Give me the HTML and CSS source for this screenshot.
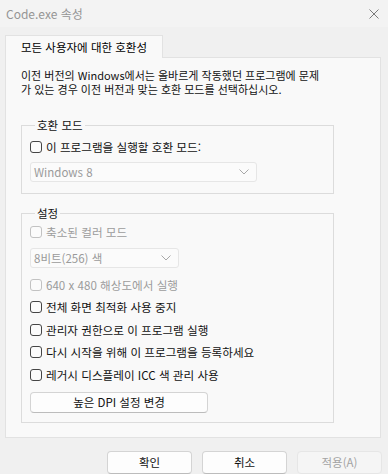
FILE: index.html
```html
<!DOCTYPE html>
<html lang="ko">
<head>
    <meta charset="UTF-8">
    <meta name="viewport" content="width=device-width, initial-scale=1.0">
    <title>Code.exe 속성</title>
    <link rel="stylesheet" href="styles.css">
</head>
<body>
    <div class="titlebar">
        <span class="title">Code.exe 속성</span>
        <svg class="close" width="10" height="10" viewBox="0 0 10 10">
            <path d="M0.5 0.5 L9.5 9.5 M9.5 0.5 L0.5 9.5" stroke="#7a7a7a" stroke-width="1" fill="none"/>
        </svg>
    </div>

    <div class="dialog">
        <div class="tabs">
            <div class="tab">모든 사용자에 대한 호환성</div>
        </div>

        <div class="panel">
            <p class="intro">이전 버전의 Windows에서는 올바르게 작동했던 프로그램에 문제<br>가 있는 경우 이전 버전과 맞는 호환 모드를 선택하십시오.</p>

            <fieldset class="group group-mode">
                <legend>호환 모드</legend>
                <div class="check"><span class="box"></span>이 프로그램을 실행할 호환 모드:</div>
                <div class="select select-os">
                    <span>Windows 8</span>
                    <svg width="10" height="6" viewBox="0 0 10 6"><path d="M0.5 0.5 L5 5 L9.5 0.5" stroke="#a8a8a8" fill="none"/></svg>
                </div>
            </fieldset>

            <fieldset class="group group-settings">
                <legend>설정</legend>
                <div class="check disabled"><span class="box"></span>축소된 컬러 모드</div>
                <div class="select select-color">
                    <span>8비트(256) 색</span>
                    <svg width="10" height="6" viewBox="0 0 10 6"><path d="M0.5 0.5 L5 5 L9.5 0.5" stroke="#a8a8a8" fill="none"/></svg>
                </div>
                <div class="check disabled"><span class="box"></span>640 x 480 해상도에서 실행</div>
                <div class="check"><span class="box"></span>전체 화면 최적화 사용 중지</div>
                <div class="check"><span class="box"></span>관리자 권한으로 이 프로그램 실행</div>
                <div class="check"><span class="box"></span>다시 시작을 위해 이 프로그램을 등록하세요</div>
                <div class="check"><span class="box"></span>레거시 디스플레이 ICC 색 관리 사용</div>
                <button class="btn btn-dpi">높은 DPI 설정 변경</button>
            </fieldset>
        </div>

        <div class="actions">
            <button class="btn">확인</button>
            <button class="btn">취소</button>
            <button class="btn" disabled>적용(A)</button>
        </div>
    </div>
</body>
</html>
```

FILE: styles.css
```css
html, body {
    margin: 0;
    padding: 0;
}

body {
    width: 388px;
    height: 474px;
    overflow: hidden;
    background-color: #f0f0f0;
    font-family: "Noto Sans CJK KR", sans-serif;
    font-size: 11px;
    color: #111;
}

.titlebar {
    height: 27px;
    background-color: #f3f3f3;
    display: flex;
    align-items: center;
    justify-content: space-between;
    padding: 0 9px 0 6px;
}

.title {
    font-size: 12px;
    color: #959595;
}

.dialog {
    padding: 8px 0 0 5px;
}

.tabs {
    display: flex;
}

.tab {
    width: 158px;
    height: 23px;
    box-sizing: border-box;
    border: 1px solid #e2e2e2;
    border-bottom: none;
    background-color: #f9f9f9;
    margin-bottom: -1px;
    position: relative;
    z-index: 1;
    text-align: center;
    line-height: 22px;
    font-size: 11.5px;
    color: #000;
}

.panel {
    width: 376px;
    box-sizing: border-box;
    border: 1px solid #e2e2e2;
    background-color: #f9f9f9;
    padding: 10px 46px 14px 15px;
}

.intro {
    margin: 0;
    line-height: 14px;
    white-space: nowrap;
}

.group {
    margin: 0;
    min-width: 0;
    border: 1px solid #dcdcdc;
    display: flex;
    flex-direction: column;
    align-items: flex-start;
}

.group legend {
    padding: 0 2px;
    margin-left: 5px;
    line-height: 14px;
    font-size: 11.5px;
}

.group-mode {
    margin-top: 22px;
    padding: 6px 8px 11px 8px;
}

.group-settings {
    margin-top: 12px;
    padding: 3px 8px 9px 8px;
    gap: 4.5px;
}

.check {
    display: flex;
    align-items: center;
    height: 18px;
    white-space: nowrap;
    font-size: 11.6px;
}

.box {
    width: 12px;
    height: 12px;
    box-sizing: border-box;
    border: 1px solid #454545;
    border-radius: 3px;
    background-color: #fbfbfb;
    margin-right: 4px;
}

.check.disabled {
    color: #9c9c9c;
}

.check.disabled .box {
    border-color: #c2c2c2;
}

.select {
    height: 20px;
    box-sizing: border-box;
    border: 1px solid #e6e6e6;
    border-radius: 3px;
    background-color: #fbfbfb;
    color: #9a9a9a;
    display: flex;
    align-items: center;
    justify-content: space-between;
    padding: 0 7px 0 3px;
    font-size: 11.5px;
}

.select-os {
    width: 227px;
    margin-top: 6px;
}

.select-color {
    width: 149px;
    margin-top: 2px;
    margin-bottom: 3.5px;
}

.btn {
    font-family: inherit;
    font-size: 11.5px;
    color: #111;
    background-color: #fdfdfd;
    border: 1px solid #d4d4d4;
    border-bottom-color: #bcbcbc;
    border-radius: 4px;
    padding: 0;
    box-sizing: border-box;
}

.btn-dpi {
    width: 178px;
    height: 21px;
    margin-top: 3.5px;
}

.actions {
    display: flex;
    justify-content: flex-end;
    gap: 10px;
    margin-top: 13px;
    padding-right: 6px;
}

.actions .btn {
    width: 85px;
    height: 23px;
}

.btn:disabled {
    background-color: #f5f5f5;
    border-color: #e6e6e6;
    color: #a3a3a3;
}
```
